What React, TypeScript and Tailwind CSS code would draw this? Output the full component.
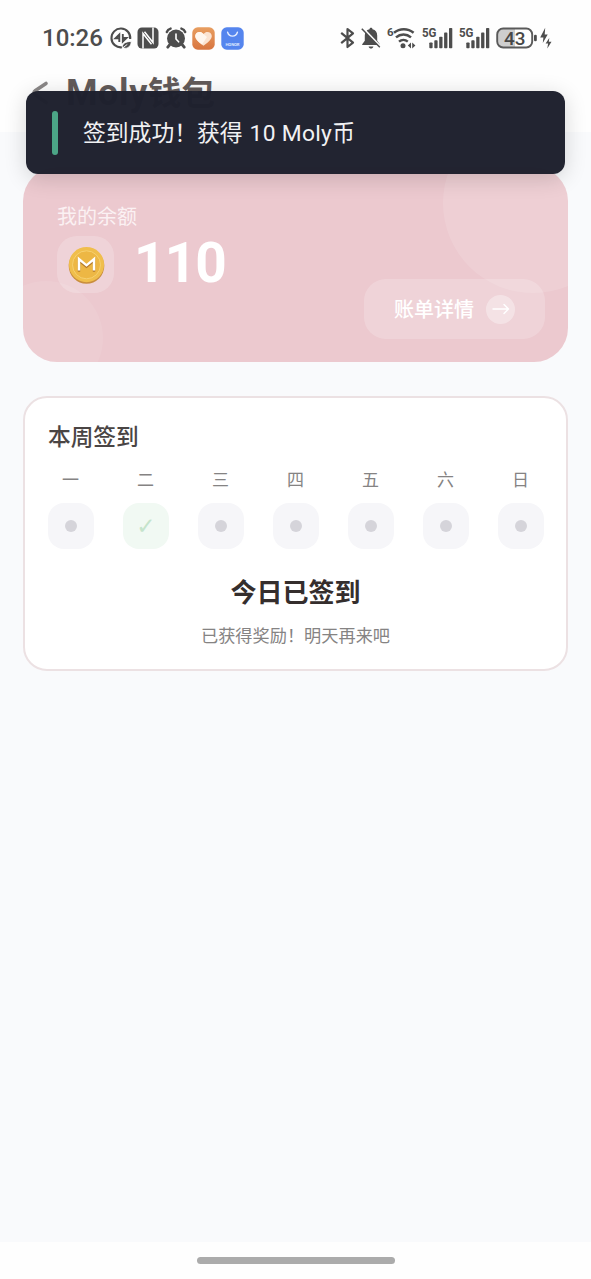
import type { ReactNode } from 'react'

interface CheckInDay {
  label: string
  checked: boolean
}

const days: CheckInDay[] = [
  { label: '一', checked: false },
  { label: '二', checked: true },
  { label: '三', checked: false },
  { label: '四', checked: false },
  { label: '五', checked: false },
  { label: '六', checked: false },
  { label: '日', checked: false },
]

function DataSaverIcon() {
  return (
    <svg width="22" height="22" viewBox="0 0 22 22" fill="none" stroke="#4d4d4d">
      <path d="M20.2 12A9.4 9.4 0 1 0 12 20.3" strokeWidth="2.1" />
      <path d="M9.300 15V7.500L5.500 11.200h4" strokeWidth="1.900" />
      <path d="M12.800 7v7.500L16.500 11h-3" strokeWidth="1.900" />
      <path d="M12.200 20.400c0-4 3.600-5.800 9-6 0 5-3.800 7.600-7 6.600z" fill="#4d4d4d" stroke="#fff" strokeWidth="0.800" />
      <path d="M12.500 21l4.800-3.600" stroke="#fff" strokeWidth="0.900" />
    </svg>
  )
}

function NfcIcon() {
  return (
    <svg width="22" height="22" viewBox="0 0 22 22" fill="none">
      <rect x="0.500" y="0.500" width="21" height="21" rx="4.500" fill="#4d4d4d" />
      <path d="M6 21.500V6.500l8.500 10.800" stroke="#fff" strokeWidth="1.500" />
      <path d="M16 .5v15L7.500 4.700" stroke="#fff" strokeWidth="1.500" />
    </svg>
  )
}

function AlarmIcon() {
  return (
    <svg width="22" height="22" viewBox="0 0 22 22" fill="none" stroke="#4d4d4d" strokeLinecap="round">
      <circle cx="11" cy="11.500" r="9" fill="#4d4d4d" stroke="none" />
      <path d="M1.800 5C2.400 3.300 3.800 2.100 5.600 1.600M20.200 5C19.600 3.300 18.200 2.100 16.400 1.600" strokeWidth="2.400" />
      <path d="M4.600 17.800 2.800 20.200M17.400 17.800l1.800 2.400" strokeWidth="2.800" />
      <path d="M11 7v5l2.600 2.800" stroke="#fff" strokeWidth="1.600" />
    </svg>
  )
}

function HeartAppIcon() {
  return (
    <svg width="23" height="23" viewBox="0 0 23 23">
      <defs>
        <linearGradient id="heartBg" x1="0" y1="0" x2="0" y2="1">
          <stop offset="0" stopColor="#e89e60" />
          <stop offset="1" stopColor="#d87540" />
        </linearGradient>
      </defs>
      <rect x="0.300" y="0.300" width="22.400" height="22.400" rx="5.500" fill="url(#heartBg)" />
      <path d="M11.500 18.800C6 14.800 3.200 12 3.200 9c0-4.200 5.700-5.700 8.300-2 2.600-3.700 8.300-2.200 8.300 2 0 3-2.800 5.800-8.300 9.800z" fill="#fbe3d1" />
      <path d="M3.200 9c0-4.200 5.700-5.700 8.300-2L15 10l-5 7.600C5.600 14.300 3.200 11.700 3.200 9z" fill="#fff6ee" />
    </svg>
  )
}

function HonorAppIcon() {
  return (
    <svg width="23" height="23" viewBox="0 0 23 23" fill="none">
      <rect x="0.300" y="0.300" width="22.400" height="22.400" rx="5.500" fill="#5585ee" />
      <path d="M6.600 5.200c1.600 5.200 8.200 5.200 9.800 0" stroke="#e4ecff" strokeWidth="1.400" strokeLinecap="round" />
      <text x="11.500" y="19.300" textAnchor="middle" fontSize="4.200" fontWeight="700" textLength="14" fill="#dfe8ff" fontFamily="Roboto, sans-serif">
        HONOR
      </text>
    </svg>
  )
}

function BluetoothIcon() {
  return (
    <svg width="15" height="22" viewBox="0 0 15 22" fill="none" stroke="#4d4d4d" strokeWidth="2.200">
      <path d="M1.200 5.800 13 15.600 7.500 20V2L13 6.400 1.200 16.200" strokeLinejoin="round" />
    </svg>
  )
}

function BellOffIcon() {
  return (
    <svg width="20" height="22" viewBox="0 0 20 22">
      <path d="M10 .8c1 0 1.500.6 1.500 1.500 3.200.8 4.700 3 4.700 6.200v5.200l2.600 3.600v.7H1.200v-.7l2.600-3.600V8.500c0-3.200 1.500-5.400 4.700-6.200C8.500 1.400 9 .8 10 .8zM7.600 19.400h4.800c-.4 1.400-1.300 2-2.400 2s-2-.6-2.400-2z" fill="#4d4d4d" />
      <path d="M2.200 1.500 20 20" stroke="#fff" strokeWidth="2" />
      <path d="M.8 1.800 18.800 20.300" stroke="#4d4d4d" strokeWidth="1.500" />
    </svg>
  )
}

function WifiIcon() {
  return (
    <svg width="29" height="28" viewBox="0 -2 29 28" fill="none" stroke="#4d4d4d">
      <text x="0" y="9.500" fontSize="11.500" fontWeight="700" fill="#4d4d4d" stroke="none" fontFamily="Roboto, sans-serif">
        6
      </text>
      <path d="M7 6.800c5.800-4.800 13.800-4.800 19.600 0" strokeWidth="2.500" />
      <path d="M9 11.400c4.400-3.800 10.600-3.800 15 0" strokeWidth="2.500" />
      <path d="M12 15.600c2.600-2.200 6.200-2.200 8.800 0" strokeWidth="2.400" />
      <circle cx="16" cy="19.800" r="2.500" fill="#4d4d4d" stroke="none" />
      <path d="M24 16.500v6l-3.200-3zM25.200 16.500v6l3.200-3z" fill="#4d4d4d" stroke="none" />
    </svg>
  )
}

function SignalIcon() {
  return (
    <svg width="31" height="30" viewBox="0 -4 31 30" fill="#4d4d4d">
      <text x="0" y="9.800" fontSize="13.500" fontWeight="700" textLength="14.500" lengthAdjust="spacingAndGlyphs" fontFamily="Roboto, sans-serif">
        5G
      </text>
      <rect x="7.300" y="15.500" width="3.300" height="5.700" rx="0.800" />
      <rect x="12.300" y="13.300" width="3.300" height="7.900" rx="0.800" />
      <rect x="17.200" y="9.800" width="3.300" height="11.400" rx="0.800" />
      <rect x="22.100" y="5.600" width="3.300" height="15.600" rx="0.800" />
      <rect x="27" y="1" width="3.300" height="20.200" rx="0.800" />
    </svg>
  )
}

function BatteryIcon() {
  return (
    <svg width="56" height="26" viewBox="0 -2 56 26" fill="none">
      <path d="M7 1.500h12v19H7A5.500 5.500 0 0 1 1.500 15V7A5.500 5.500 0 0 1 7 1.500z" fill="#cecece" />
      <rect x="1.200" y="1.500" width="35" height="19" rx="6" stroke="#5a5a5a" strokeWidth="1.900" />
      <rect x="38" y="7.800" width="2.800" height="6.400" rx="1.300" fill="#4d4d4d" />
      <path d="M49.200.8 44.200 10.500h3.200L46.800 16l4.900-8.500h-3z" fill="#4d4d4d" />
      <path d="M53.300 11 49.600 16.600h2.500l-.8 4.800 4.200-6.600h-2.700z" fill="#4d4d4d" />
      <text x="18.700" y="17.800" textAnchor="middle" fontSize="19" fontWeight="500" fill="#474747" textLength="21.500" lengthAdjust="spacingAndGlyphs" fontFamily="Roboto, sans-serif">
        43
      </text>
    </svg>
  )
}

function CoinIcon() {
  return (
    <svg width="38" height="38" viewBox="0 0 38 38" fill="none">
      <circle cx="19.500" cy="20" r="17.800" fill="#c98e3e" />
      <circle cx="19.500" cy="18.600" r="17.600" fill="#f0be4c" />
      <circle cx="19.500" cy="18.800" r="14" fill="#edb744" stroke="#f6d070" strokeWidth="1" />
      <path d="M12 25.800V14.500l7.500 6.300 7.500-6.300v11.300" stroke="#b37a2b" strokeWidth="2.400" />
      <path d="M12 24.500V13l7.500 6.300L27 13v11.500" stroke="#fff" strokeWidth="2.400" />
    </svg>
  )
}

function StatusBar() {
  return (
    <div className="flex h-[76px] items-center justify-between pr-[39px] pl-[42px]">
      <div className="flex items-center gap-[5.500px]">
        <span className="w-[62px] text-[24px] leading-none font-medium text-[#4d4d4d]">10:26</span>
        <DataSaverIcon />
        <NfcIcon />
        <AlarmIcon />
        <HeartAppIcon />
        <HonorAppIcon />
      </div>
      <div className="flex items-center gap-[6px]">
        <BluetoothIcon />
        <BellOffIcon />
        <WifiIcon />
        <SignalIcon />
        <SignalIcon />
        <BatteryIcon />
      </div>
    </div>
  )
}

function Toast({ children }: { children: ReactNode }) {
  return (
    <div className="absolute top-[91px] left-[26px] flex h-[83px] w-[539px] items-center rounded-[12px] bg-[#1e202d]/98 pl-[26px] shadow-[0_4px_22px_rgba(0,0,0,0.16)]">
      <div className="h-[44px] w-[6px] rounded-full bg-[#4ca586]" />
      <p className="ml-[25px] pt-[3px] text-[22.800px] leading-none text-[#f1f1f3]">{children}</p>
    </div>
  )
}

function BalanceCard() {
  return (
    <section className="relative flex h-[195px] justify-between overflow-hidden rounded-[34px] bg-[#ecc9cf] pr-[23px] pl-[34px]">
      <div className="absolute -top-[54px] -right-[55px] size-[180px] rounded-full bg-white/12" />
      <div className="absolute -bottom-[33px] -left-[34px] size-[114px] rounded-full bg-white/8" />
      <div className="relative pt-[40px]">
        <p className="text-[20px] leading-[20px] text-[#fbf1f3]">我的余额</p>
        <div className="mt-[9px] flex items-center">
          <div className="flex size-[57px] items-center justify-center rounded-[20px] bg-white/20">
            <CoinIcon />
          </div>
          <span className="-mt-[2px] ml-[20px] text-[55px] leading-none font-bold tracking-[-0.900px] text-white">110</span>
        </div>
      </div>
      <button className="relative mb-[23px] flex h-[60px] w-[181px] items-center self-end rounded-[22px] bg-white/20 pl-[30px]">
        <span className="pt-[2px] text-[20px] leading-none font-medium text-white">账单详情</span>
        <span className="ml-[12px] flex size-[29px] items-center justify-center rounded-full bg-white/35">
          <svg width="18" height="12" viewBox="0 0 18 12" fill="none" stroke="#fff" strokeWidth="1.500" strokeLinecap="round" strokeLinejoin="round">
            <path d="M1 6h15.500M12 1.500 16.500 6 12 10.500" />
          </svg>
        </span>
      </button>
    </section>
  )
}

function CheckInCard() {
  return (
    <section className="mt-[34px] h-[275px] rounded-[24px] border-2 border-[#ece1e3] bg-white px-[23px] pt-[28px]">
      <h2 className="text-[22.700px] leading-[24px] font-medium text-[#4a4544]">本周签到</h2>
      <div className="-mr-px mt-[20px] flex justify-between">
        {days.map(day => (
          <div key={day.label} className="flex w-[46px] flex-col items-center">
            <span className="pr-px text-[17px] leading-[20px] text-[#858383]">{day.label}</span>
            {day.checked ? (
              <div className="mt-[13px] flex size-[46px] items-center justify-center rounded-[16px] bg-[#f1f9f3]">
                <span className="font-['DejaVu_Sans'] text-[23px] leading-none text-[#c5e4cc]">✓</span>
              </div>
            ) : (
              <div className="mt-[13px] flex size-[46px] items-center justify-center rounded-[16px] bg-[#f6f6f9]">
                <div className="size-[12px] rounded-full bg-[#d5d4da]" />
              </div>
            )}
          </div>
        ))}
      </div>
      <p className="mt-[29px] text-center text-[26px] leading-[30px] font-bold text-[#352e2d]">今日已签到</p>
      <p className="mt-[18px] text-center text-[17.200px] leading-[20px] text-[#858383]">已获得奖励！明天再来吧</p>
    </section>
  )
}

export default function App() {
  return (
    <div className="relative flex h-[1279px] w-[591px] flex-col overflow-hidden bg-[#f9fafc] font-[Roboto,'Noto_Sans_CJK_SC',sans-serif]">
      <header className="h-[132px] bg-[#fefefe]">
        <StatusBar />
        <div className="flex h-[34px] items-center pl-[32px]">
          <svg width="18" height="28" viewBox="0 0 18 28" fill="none" stroke="#8a8787" strokeWidth="3.600" strokeLinecap="round" strokeLinejoin="round">
            <path d="M14 4.500 3.500 11.500c-2 1.500-2 3 0 4.500L14 23.500" />
          </svg>
          <h1 className="ml-[16px] text-[33.500px] leading-none font-bold text-[#625b5a]">
            <span className="text-[36px] tracking-[0.600px]">Moly</span>钱包
          </h1>
        </div>
      </header>

      <main className="flex-1 px-[23px] pt-[35px]">
        <BalanceCard />
        <CheckInCard />
      </main>

      {/* System gesture bar */}
      <footer className="flex h-[37px] justify-center bg-[#fefefe] pt-[15px]">
        <div className="h-[7px] w-[198px] rounded-full bg-[#ababab]" />
      </footer>

      <Toast>
        签到成功！获得<span className="ml-px tracking-[0.300px]"> 10 Moly</span>币
      </Toast>
    </div>
  )
}
